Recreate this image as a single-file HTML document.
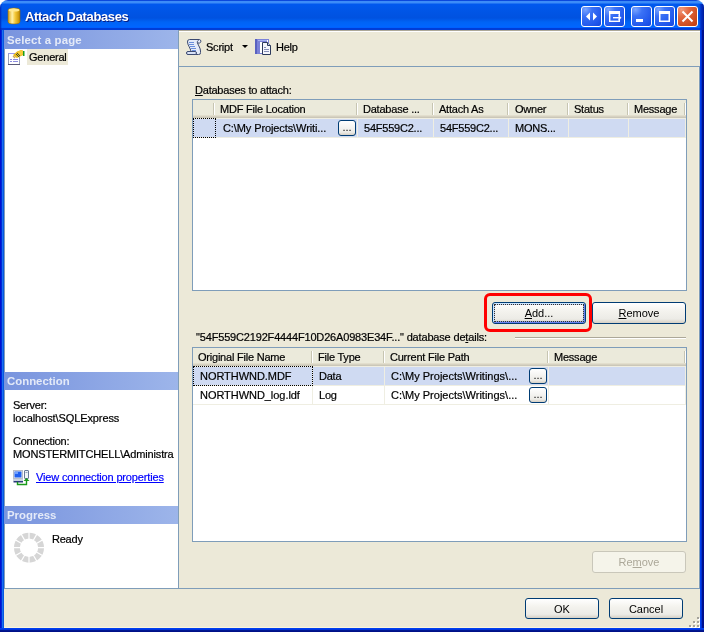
<!DOCTYPE html>
<html><head><meta charset="utf-8">
<style>
*{box-sizing:border-box}
html,body{margin:0;padding:0;width:704px;height:632px;overflow:hidden;background:#fff}
body{font-family:"Liberation Sans",sans-serif;font-size:11px;color:#000;position:relative}
.a{position:absolute}
.t{position:absolute;white-space:pre;line-height:13px;font-size:11px;letter-spacing:-0.22px;-webkit-text-stroke:0.2px currentColor}
#win{position:absolute;left:0;top:0;width:704px;height:632px;border-radius:8px 8px 0 0;overflow:hidden;
 background:linear-gradient(180deg,#0a48dd 0px,#0a48dd 1px,#3c8cf8 1px,#3c8cf8 2.5px,#0058ee 4.5px,#0055e5 12px,#0052e0 18px,#0063f5 22px,#0066ff 27px,#005bff 28px,#003dd7 28px,#003dd7 30px)}
#frameL{left:0;top:30px;width:4px;height:602px;background:linear-gradient(90deg,#0010d0 0,#0010d0 1px,#0028d8 1px,#0028d8 2px,#1870f0 2px,#1870f0 3px,#0858e0 3px)}
#frameR{left:700px;top:30px;width:4px;height:602px;background:linear-gradient(90deg,#0040f0 0,#0040f0 1px,#0030d0 1px,#0030d0 2px,#001090 2px,#001090 3px,#00108c 3px)}
#frameB{left:0;top:628px;width:704px;height:4px;background:linear-gradient(180deg,#0040f0 0,#0040f0 1px,#0035e0 1px,#0035e0 2px,#001890 2px,#001890 3px,#001088 3px)}
#client{left:4px;top:30px;width:696px;height:598px;background:#ECE9D8}
.tb{width:21px;height:21px;top:6px;border:1px solid #fff;border-radius:3px;
 background:radial-gradient(circle at 90% 90%,#0054e9 0%,#2263d5 55%,#4480f8 90%,#fff 100%)}
.tb.close{background:radial-gradient(circle at 90% 90%,#cc4600 0%,#dc6527 55%,#cd7546 90%,#fff 100%)}
.hdr{left:4px;width:174px;height:18px;background:linear-gradient(90deg,#7994de,#9db5ea);color:#e4eaf8;font-weight:bold;font-size:11.4px;line-height:18px;padding-left:3px;white-space:pre}
.btn{position:absolute;border:1px solid #003c74;border-radius:3px;background:linear-gradient(180deg,#fff 0%,#f4f3ee 40%,#ecebe6 80%,#d6d0c5 100%);text-align:center;line-height:20px;font-size:11px;white-space:pre}
.grid{position:absolute;border:1px solid #7f9db9;background:#fff;overflow:hidden}
.gh{position:absolute;left:0;top:0;height:19px;background:linear-gradient(180deg,#ebeadb 0,#ebeadb 15px,#e2decd 15px,#e2decd 16px,#d6d2c2 16px,#d6d2c2 17px,#cbc7b8 17px,#cbc7b8 18px)}
.gd{position:absolute;top:3px;width:2px;height:12px;border-left:1px solid #c7c5b2;border-right:1px solid #fff}
.sel{background:#cfdaf2}
.eb{position:absolute;width:18px;height:16px;border:1px solid #003c74;border-radius:3px;background:linear-gradient(180deg,#fff,#ecebe6 80%,#d6d0c5);font-size:11px;line-height:12px;text-align:center}
u{text-decoration:underline;text-decoration-thickness:1px;text-underline-offset:1px}
</style></head><body>
<div id="win" style="will-change:transform">
 <!-- title -->
 <svg class="a" style="left:7px;top:7px" width="14" height="18" viewBox="0 0 14 18">
  <defs><linearGradient id="dbg" x1="0" x2="1"><stop offset="0" stop-color="#d8a010"/><stop offset="0.35" stop-color="#fff0a8"/><stop offset="0.6" stop-color="#f4c838"/><stop offset="1" stop-color="#c08a00"/></linearGradient></defs>
  <path d="M1 3 Q1 1 7 1 Q13 1 13 3 V15 Q13 17 7 17 Q1 17 1 15 Z" fill="url(#dbg)" stroke="#8a6a10" stroke-width="0.6"/>
  <ellipse cx="7" cy="3" rx="5.5" ry="1.6" fill="#ffe890"/>
 </svg>
 <div class="t" style="left:25px;top:10px;font-size:13px;font-weight:bold;color:#fff;text-shadow:1px 1px #0a1e80;letter-spacing:-0.35px;-webkit-text-stroke:0">Attach Databases</div>
 <svg class="a" style="left:0;top:0" width="704" height="30">
  <defs>
   <radialGradient id="bg1" cx="0.2" cy="0.15" r="1.1">
    <stop offset="0" stop-color="#7aa4ff"/><stop offset="0.3" stop-color="#3b72f6"/><stop offset="0.75" stop-color="#2258ec"/><stop offset="1" stop-color="#1548e0"/>
   </radialGradient>
   <radialGradient id="bg2" cx="0.2" cy="0.15" r="1.1">
    <stop offset="0" stop-color="#f19a7d"/><stop offset="0.35" stop-color="#e2673f"/><stop offset="0.8" stop-color="#cc4a1b"/><stop offset="1" stop-color="#c03c10"/>
   </radialGradient>
  </defs>
  <g stroke="#fff" stroke-width="1">
   <rect x="581.5" y="6.5" width="20" height="20" rx="2.5" fill="url(#bg1)"/>
   <rect x="604.5" y="6.5" width="20" height="20" rx="2.5" fill="url(#bg1)"/>
   <rect x="631.5" y="6.5" width="20" height="20" rx="2.5" fill="url(#bg1)"/>
   <rect x="654.5" y="6.5" width="20" height="20" rx="2.5" fill="url(#bg1)"/>
   <rect x="677.5" y="6.5" width="20" height="20" rx="2.5" fill="url(#bg2)"/>
  </g>
  <g fill="#fff">
   <path d="M586 16.5 L590 12.5 L590 20.5 Z"/>
   <path d="M597 16.5 L593 12.5 L593 20.5 Z"/>
   <rect x="609" y="11" width="11" height="3"/>
   <rect x="609" y="14" width="1.4" height="8"/>
   <rect x="609" y="20.6" width="11" height="1.4"/>
   <rect x="618.6" y="14" width="1.4" height="2"/>
   <rect x="618.6" y="19" width="1.4" height="2"/>
   <rect x="613" y="17" width="6" height="1.4"/>
   <path d="M618.5 15 L621.5 17.7 L618.5 20.4 Z"/>
   <rect x="636" y="19" width="7" height="3"/>
   <path d="M659 11h11v11h-11zm1.5 3v6.5h8v-6.5z" fill-rule="evenodd"/>
  </g>
  <path d="M682.5 11.5 L692.5 21.5 M692.5 11.5 L682.5 21.5" stroke="#fff" stroke-width="2"/>
 </svg>
 <div class="a" style="left:0;top:4px;width:2px;height:26px;background:linear-gradient(90deg,#0026b8,rgba(0,60,230,0))"></div>
 <div class="a" style="left:699px;top:4px;width:5px;height:26px;background:linear-gradient(90deg,rgba(0,50,200,0),#0030c8 40%,#001a98)"></div>
 <div id="frameL" class="a"></div>
 <div id="frameR" class="a"></div>
 <div id="frameB" class="a"></div>
 <div id="client" class="a"></div>

 <!-- left panel -->
 <div class="a" style="left:4px;top:30px;width:174px;height:558px;background:#fff"></div>
 <div class="a" style="left:178px;top:30px;width:1px;height:558px;background:#7f9db9"></div>
 <div class="a" style="left:4px;top:30px;width:1px;height:558px;background:#7f9db9"></div>
 <div class="a hdr" style="top:30px;height:19px;line-height:20px;letter-spacing:0.15px">Select a page</div>
 <div class="a" style="left:27px;top:49px;width:41px;height:16px;background:#ece9d8"></div>
 <div class="t" style="left:29px;top:51px">General</div>
 <div class="a hdr" style="top:372px">Connection</div>
 <div class="t" style="left:13px;top:399px">Server:</div>
 <div class="t" style="left:13px;top:412px;letter-spacing:-0.1px">localhost\SQLExpress</div>
 <div class="t" style="left:13px;top:435px">Connection:</div>
 <div class="t" style="left:13px;top:448px;letter-spacing:-0.15px">MONSTERMITCHELL\Administra</div>
 <div class="t" style="left:36px;top:471px;color:#0000ff;text-decoration:underline;letter-spacing:-0.16px">View connection properties</div>
 <div class="a hdr" style="top:506px">Progress</div>
 <div class="t" style="left:52px;top:533px">Ready</div>

 <div class="a" style="left:4px;top:627px;width:696px;height:1px;background:#faf4de"></div>
 <div class="a" style="left:698px;top:67px;width:1px;height:521px;background:#f4eedc"></div>
 <!-- bottom separator -->
 <div class="a" style="left:4px;top:588px;width:696px;height:1px;background:#7f9db9"></div>

 <!-- toolbar -->
 <div class="a" style="left:179px;top:30px;width:521px;height:1px;background:#aca899"></div>
 <div class="a" style="left:179px;top:31px;width:521px;height:1px;background:#fff"></div>
 <div class="a" style="left:179px;top:66px;width:521px;height:1px;background:#7f9db9"></div>
 <div class="a" style="left:699px;top:66px;width:1px;height:522px;background:#7f9db9"></div>
 <div class="t" style="left:206px;top:41px">Script</div>
 <div class="a" style="left:242px;top:45px;width:0;height:0;border-left:3px solid transparent;border-right:3px solid transparent;border-top:3px solid #000"></div>
 <div class="t" style="left:276px;top:41px">Help</div>

 <!-- grid 1 -->
 <div class="t" style="left:195px;top:84px"><u>D</u>atabases to attach:</div>
 <div class="grid" style="left:192px;top:99px;width:495px;height:192px">
  <div class="gh" style="width:493px;height:18px"></div>
  <div class="gd" style="left:20px"></div>
  <div class="gd" style="left:163px"></div>
  <div class="gd" style="left:239px"></div>
  <div class="gd" style="left:314px"></div>
  <div class="gd" style="left:374px"></div>
  <div class="gd" style="left:434px"></div>
  <div class="gd" style="left:491px"></div>
  <div class="t" style="left:27px;top:3px">MDF File Location</div>
  <div class="t" style="left:170px;top:3px">Database ...</div>
  <div class="t" style="left:246px;top:3px">Attach As</div>
  <div class="t" style="left:322px;top:3px">Owner</div>
  <div class="t" style="left:381px;top:3px">Status</div>
  <div class="t" style="left:441px;top:3px">Message</div>
  <div class="a" style="left:0;top:18px;width:493px;height:20px;background:#efeee2"></div>
  <div class="a sel" style="left:0;top:19px;width:492px;height:18px"></div>
  <div class="a" style="left:164px;top:18px;width:1px;height:20px;background:#efeee2"></div>
  <div class="a" style="left:240px;top:18px;width:1px;height:20px;background:#efeee2"></div>
  <div class="a" style="left:315px;top:18px;width:1px;height:20px;background:#efeee2"></div>
  <div class="a" style="left:375px;top:18px;width:1px;height:20px;background:#efeee2"></div>
  <div class="a" style="left:435px;top:18px;width:1px;height:20px;background:#efeee2"></div>
  <div class="a" style="left:0;top:18px;width:23px;height:20px;border:1px dotted #000"></div>
  <div class="t" style="left:30px;top:22px;letter-spacing:-0.1px">C:\My Projects\Writi...</div>
  <div class="eb" style="left:145px;top:20px">...</div>
  <div class="t" style="left:171px;top:22px">54F559C2...</div>
  <div class="t" style="left:247px;top:22px">54F559C2...</div>
  <div class="t" style="left:322px;top:22px">MONS...</div>
 </div>
 <div class="a" style="left:484px;top:293px;width:108px;height:39px;border:3px solid #ff0000;border-radius:6px"></div>
 <div class="btn" style="left:492px;top:302px;width:94px;height:22px;box-shadow:inset 1px 1px #cee7ff,inset -1px -1px #6982ee,inset 2px 2px #bcd4f6,inset -2px -2px #89ade4"><div class="a" style="left:1px;top:1px;right:1px;bottom:1px;border:1px dotted #3a3028"></div><u>A</u>dd...</div>
 <div class="btn" style="left:592px;top:302px;width:94px;height:22px"><u>R</u>emove</div>

 <!-- grid 2 -->
 <div class="t" style="left:196px;top:331px;letter-spacing:-0.17px">"54F559C2192F4444F10D26A0983E34F..." database de<u>t</u>ails:</div>
 <div class="a" style="left:515px;top:337px;width:171px;height:1px;background:#aca899"></div><div class="a" style="left:515px;top:338px;width:171px;height:1px;background:#fff"></div>
 <div class="grid" style="left:192px;top:347px;width:495px;height:195px">
  <div class="gh" style="width:493px;height:18px"></div>
  <div class="gd" style="left:118px"></div>
  <div class="gd" style="left:190px"></div>
  <div class="gd" style="left:354px"></div>
  <div class="gd" style="left:491px"></div>
  <div class="t" style="left:5px;top:3px">Original File Name</div>
  <div class="t" style="left:125px;top:3px">File Type</div>
  <div class="t" style="left:197px;top:3px">Current File Path</div>
  <div class="t" style="left:361px;top:3px">Message</div>
  <div class="a" style="left:0;top:18px;width:493px;height:39px;background:#efeee2"></div>
  <div class="a sel" style="left:0;top:19px;width:492px;height:18px"></div>
  <div class="a" style="left:0;top:38px;width:492px;height:18px;background:#fff"></div>
  <div class="a" style="left:119px;top:18px;width:1px;height:39px;background:#efeee2"></div>
  <div class="a" style="left:191px;top:18px;width:1px;height:39px;background:#efeee2"></div>
  <div class="a" style="left:355px;top:18px;width:1px;height:39px;background:#efeee2"></div>
  <div class="a" style="left:0;top:18px;width:120px;height:20px;border:1px dotted #000"></div>
  <div class="t" style="left:7px;top:22px;letter-spacing:-0.05px">NORTHWND.MDF</div>
  <div class="t" style="left:126px;top:22px">Data</div>
  <div class="t" style="left:198px;top:22px;letter-spacing:0">C:\My Projects\Writings\...</div>
  <div class="eb" style="left:336px;top:20px">...</div>
  <div class="t" style="left:7px;top:41px;letter-spacing:-0.05px">NORTHWND_log.ldf</div>
  <div class="t" style="left:126px;top:41px">Log</div>
  <div class="t" style="left:198px;top:41px;letter-spacing:0">C:\My Projects\Writings\...</div>
  <div class="eb" style="left:336px;top:39px">...</div>
 </div>
 <div class="btn" style="left:592px;top:551px;width:94px;height:22px;border-color:#c9c7ba;background:#f5f4ea;color:#aca899">Re<u>m</u>ove</div>

 <div class="btn" style="left:525px;top:598px;width:74px;height:21px">OK</div>
 <div class="btn" style="left:609px;top:598px;width:74px;height:21px">Cancel</div>

 <!-- icons -->
 <svg class="a" style="left:8px;top:49px" width="17" height="16" viewBox="0 0 17 16">
  <rect x="0.5" y="4.5" width="11" height="11" fill="#fff" stroke="#9aa0b8"/>
  <rect x="0.5" y="4" width="7" height="1" fill="#9a9af0"/>
  <rect x="0" y="15" width="12" height="1" fill="#5a5a78"/>
  <rect x="2" y="10" width="2" height="1" fill="#8c8ce0"/><rect x="5" y="10" width="5" height="1" fill="#8c8ce0"/>
  <rect x="2" y="12" width="2" height="1" fill="#8c8ce0"/><rect x="5" y="12" width="5" height="1" fill="#8c8ce0"/>
  <path d="M5 6 L9 2.5 L13 1 L15 1.5 L15.5 6 L13 7 L11 8 L9 9 L7 8 Z" fill="#e8b820"/>
  <path d="M9.5 3 L13 1.2 L15 2 L14.5 5.5 L12 6.5 Z" fill="#f6cc3a"/>
  <path d="M8 5 L11 8 M9 4 L12 7" stroke="#1a3a2a" stroke-width="0.8"/>
  <rect x="15" y="2" width="1.5" height="5" fill="#1aa01a"/>
  <path d="M5 7 L7 9" stroke="#c8a860" stroke-width="1.2"/>
 </svg>
 <svg class="a" style="left:186px;top:39px" width="17" height="16" viewBox="0 0 17 16">
  <path d="M3.5 0.5 H13.5 A1.8 1.8 0 0 1 13.5 4 H11.5 C12.5 7 14.5 9 14.5 12 V13.5 A1.8 1.8 0 0 1 12.5 15.5 H2.5 A1.5 1.5 0 0 1 2.5 12.5 H5 C4.5 9 1.5 6 1.5 3 A2.2 2.2 0 0 1 3.5 0.5 Z" fill="#e4ebf9" stroke="#3c4a70"/>
  <path d="M11.5 4 C11 3 11.5 1.5 12.5 1.5" fill="none" stroke="#3c4a70"/>
  <g fill="#6a8fdc"><rect x="3" y="3" width="5" height="1"/><rect x="3" y="5" width="5" height="1"/><rect x="4" y="7" width="5" height="1"/><rect x="5" y="9" width="5" height="1"/><rect x="6" y="11" width="4" height="1"/></g>
  <rect x="0.5" y="12.5" width="10" height="3" rx="1.5" fill="#d8e2f8" stroke="#3c4a70"/>
 </svg>
 <svg class="a" style="left:255px;top:39px" width="17" height="17" viewBox="0 0 17 17">
  <rect x="0" y="0" width="14" height="15" fill="#7b82d8"/>
  <rect x="0" y="0" width="2" height="15" fill="#5a62c0"/>
  <rect x="3" y="1" width="10" height="1" fill="#a8b4f0"/>
  <rect x="5" y="3" width="7" height="11" fill="#fff"/>
  <rect x="12" y="1" width="1" height="13" fill="#fff"/>
  <path d="M7.5 3.5 H12.5 L15.5 6.5 V15.5 H7.5 Z" fill="#f4f6fc" stroke="#2c3a5c"/>
  <path d="M12.5 3.5 V6.5 H15.5" fill="#c8d0e8" stroke="#2c3a5c"/>
  <g fill="#8890b8"><rect x="9" y="8" width="2" height="1"/><rect x="9" y="10" width="5" height="1"/><rect x="9" y="12" width="5" height="1"/></g>
 </svg>
 <svg class="a" style="left:13px;top:470px" width="17" height="16" viewBox="0 0 17 16">
  <rect x="0.5" y="0.5" width="9" height="8" fill="#e8ecf0" stroke="#b8bcc8"/>
  <rect x="1.5" y="1.5" width="7" height="6" fill="#2060f0"/>
  <rect x="2" y="2" width="3" height="2" fill="#70a0ff"/>
  <rect x="0" y="9" width="10" height="2" fill="#c8d0e0"/>
  <rect x="0.5" y="11" width="9.5" height="1.5" fill="#2a3a78"/>
  <rect x="11.5" y="0.5" width="4" height="8" rx="0.5" fill="#f0f4f8" stroke="#6a7a98"/>
  <rect x="12.5" y="2" width="2" height="1" fill="#9aa8c0"/>
  <path d="M4.5 12 V14.5 H13.5 V9" fill="none" stroke="#1a9a1a" stroke-width="1.4"/>
  <path d="M10.5 11 L13.5 8 L16.5 11 Z" fill="#1a9a1a"/>
 </svg>
 <svg class="a" style="left:13px;top:532px" width="32" height="32" viewBox="0 0 32 32">
  <circle cx="16" cy="15.7" r="12.1" fill="none" stroke="#d6d6d6" stroke-width="5.8"/>
  <g stroke="#fff" stroke-width="1.2">
   <path d="M16 0 V32 M0 15.7 H32"/>
   <path d="M16 15.7 L24 1.84 M16 15.7 L8 29.56 M16 15.7 L29.86 7.7 M16 15.7 L2.14 23.7 M16 15.7 L8 1.84 M16 15.7 L24 29.56 M16 15.7 L2.14 7.7 M16 15.7 L29.86 23.7"/>
  </g>
 </svg>
 <svg class="a" style="left:688px;top:616px" width="12" height="12">
  <g fill="#fff"><rect x="10" y="2" width="2" height="2"/><rect x="6" y="6" width="2" height="2"/><rect x="10" y="6" width="2" height="2"/><rect x="2" y="10" width="2" height="2"/><rect x="6" y="10" width="2" height="2"/><rect x="10" y="10" width="2" height="2"/></g>
  <g fill="#a4a29a"><rect x="9" y="1" width="2" height="2"/><rect x="5" y="5" width="2" height="2"/><rect x="9" y="5" width="2" height="2"/><rect x="1" y="9" width="2" height="2"/><rect x="5" y="9" width="2" height="2"/><rect x="9" y="9" width="2" height="2"/></g>
 </svg>
</div>
</body></html>
